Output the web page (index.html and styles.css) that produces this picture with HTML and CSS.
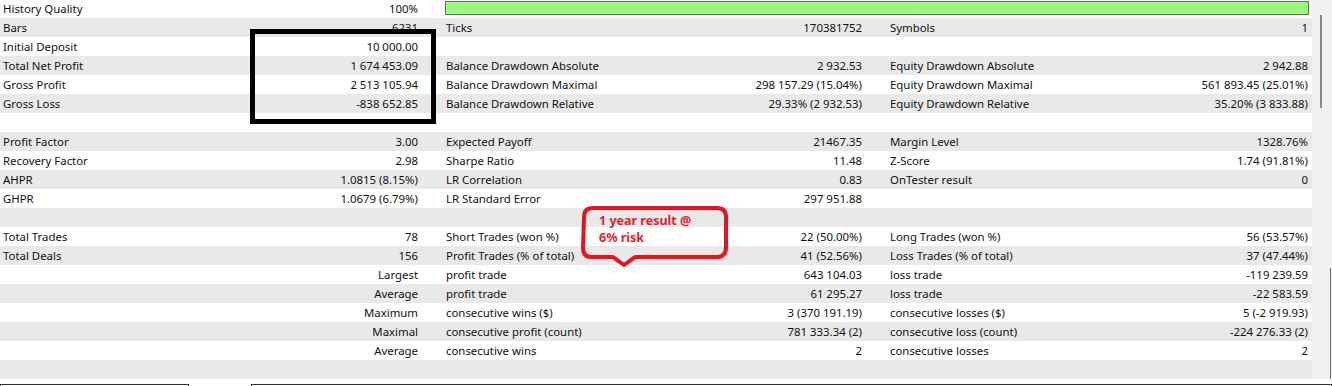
FILE: index.html
```html
<!DOCTYPE html>
<html>
<head>
<meta charset="utf-8">
<link rel="stylesheet" href="styles.css">
</head>
<body>
<div class="screen">
  <div class="main">
    <div class="report">
      <div class="row first">
        <div class="grp"><span>History Quality</span><span>100%</span></div>
        <div class="quality"><div class="qbar"></div></div>
      </div>
      <div class="row alt">
        <div class="grp"><span>Bars</span><span>6231</span></div>
        <div class="grp"><span>Ticks</span><span>170381752</span></div>
        <div class="grp"><span>Symbols</span><span>1</span></div>
      </div>
      <div class="row">
        <div class="grp"><span>Initial Deposit</span><span>10 000.00</span></div>
        <div class="grp"></div>
        <div class="grp"></div>
      </div>
      <div class="row alt">
        <div class="grp"><span>Total Net Profit</span><span>1 674 453.09</span></div>
        <div class="grp"><span>Balance Drawdown Absolute</span><span>2 932.53</span></div>
        <div class="grp"><span>Equity Drawdown Absolute</span><span>2 942.88</span></div>
      </div>
      <div class="row">
        <div class="grp"><span>Gross Profit</span><span>2 513 105.94</span></div>
        <div class="grp"><span>Balance Drawdown Maximal</span><span>298 157.29 (15.04%)</span></div>
        <div class="grp"><span>Equity Drawdown Maximal</span><span>561 893.45 (25.01%)</span></div>
      </div>
      <div class="row alt">
        <div class="grp"><span>Gross Loss</span><span>-838 652.85</span></div>
        <div class="grp"><span>Balance Drawdown Relative</span><span>29.33% (2 932.53)</span></div>
        <div class="grp"><span>Equity Drawdown Relative</span><span>35.20% (3 833.88)</span></div>
      </div>
      <div class="row"></div>
      <div class="row alt">
        <div class="grp"><span>Profit Factor</span><span>3.00</span></div>
        <div class="grp"><span>Expected Payoff</span><span>21467.35</span></div>
        <div class="grp"><span>Margin Level</span><span>1328.76%</span></div>
      </div>
      <div class="row">
        <div class="grp"><span>Recovery Factor</span><span>2.98</span></div>
        <div class="grp"><span>Sharpe Ratio</span><span>11.48</span></div>
        <div class="grp"><span>Z-Score</span><span>1.74 (91.81%)</span></div>
      </div>
      <div class="row alt">
        <div class="grp"><span>AHPR</span><span>1.0815 (8.15%)</span></div>
        <div class="grp"><span>LR Correlation</span><span>0.83</span></div>
        <div class="grp"><span>OnTester result</span><span>0</span></div>
      </div>
      <div class="row">
        <div class="grp"><span>GHPR</span><span>1.0679 (6.79%)</span></div>
        <div class="grp"><span>LR Standard Error</span><span>297 951.88</span></div>
        <div class="grp"></div>
      </div>
      <div class="row alt"></div>
      <div class="row">
        <div class="grp"><span>Total Trades</span><span>78</span></div>
        <div class="grp"><span>Short Trades (won %)</span><span>22 (50.00%)</span></div>
        <div class="grp"><span>Long Trades (won %)</span><span>56 (53.57%)</span></div>
      </div>
      <div class="row alt">
        <div class="grp"><span>Total Deals</span><span>156</span></div>
        <div class="grp"><span>Profit Trades (% of total)</span><span>41 (52.56%)</span></div>
        <div class="grp"><span>Loss Trades (% of total)</span><span>37 (47.44%)</span></div>
      </div>
      <div class="row">
        <div class="grp"><span></span><span>Largest</span></div>
        <div class="grp"><span>profit trade</span><span>643 104.03</span></div>
        <div class="grp"><span>loss trade</span><span>-119 239.59</span></div>
      </div>
      <div class="row alt">
        <div class="grp"><span></span><span>Average</span></div>
        <div class="grp"><span>profit trade</span><span>61 295.27</span></div>
        <div class="grp"><span>loss trade</span><span>-22 583.59</span></div>
      </div>
      <div class="row">
        <div class="grp"><span></span><span>Maximum</span></div>
        <div class="grp"><span>consecutive wins ($)</span><span>3 (370 191.19)</span></div>
        <div class="grp"><span>consecutive losses ($)</span><span>5 (-2 919.93)</span></div>
      </div>
      <div class="row alt">
        <div class="grp"><span></span><span>Maximal</span></div>
        <div class="grp"><span>consecutive profit (count)</span><span>781 333.34 (2)</span></div>
        <div class="grp"><span>consecutive loss (count)</span><span>-224 276.33 (2)</span></div>
      </div>
      <div class="row">
        <div class="grp"><span></span><span>Average</span></div>
        <div class="grp"><span>consecutive wins</span><span>2</span></div>
        <div class="grp"><span>consecutive losses</span><span>2</span></div>
      </div>
      <div class="row alt"></div>
    </div>
    <div class="scroll"><div class="thumb"></div><div class="edge"></div></div>
  </div>
  <div class="bottom">
    <div class="box box-left"></div>
    <div class="box box-right"></div>
  </div>

  <div class="highlight"></div>
  <svg class="callout" width="156" height="70" viewBox="0 0 156 70">
    <path d="M15 5 L139 5 Q148 5 148 14 L148 44 Q148 54 139 54 L57 54 L46 62 L35 54 L13 54 Q5 54 5 45 L6 14 Q6 5 15 5 Z" fill="none" stroke="#e8131c" stroke-width="4" stroke-linejoin="round"/>
  </svg>
  <div class="callout-text">1 year result @<br>6% risk</div>
</div>
</body>
</html>
```
FILE: styles.css
```css
* { box-sizing: border-box; }
html, body { margin: 0; padding: 0; background: #ffffff; }
body {
  font-family: "Segoe UI", "Noto Sans", "Open Sans", sans-serif;
  font-size: 11.4px;
  color: #111111;
  overflow: hidden;
}
.screen {
  position: relative;
  width: 1332px;
  height: 386px;
  overflow: hidden;
}
.main {
  display: flex;
  height: 379px;
  overflow: hidden;
}
.report {
  width: 1312px;
  margin-top: -1px;
}
.row {
  display: grid;
  grid-template-columns: 415px 416px 418px;
  column-gap: 28px;
  height: 19px;
  padding: 0 4px 0 3px;
  align-items: center;
  background: #ffffff;
}
.row.alt { background: #e9e9e9; }
.grp {
  display: flex;
  justify-content: space-between;
  white-space: nowrap;
  line-height: 19px;
}
.quality {
  grid-column: 2 / 4;
  height: 19px;
  display: flex;
  align-items: flex-start;
  padding-top: 2px;
  margin-left: -1px;
  margin-right: -1px;
}
.qbar {
  width: 100%;
  height: 14px;
  background: #98fb7f;
  border: 1px solid #6a6a6a;
}
.scroll {
  position: relative;
  width: 20px;
  background: #f0f0f0;
}
.thumb {
  margin: 15px 0 0 8px;
  width: 2px;
  height: 93px;
  background: #8a8a8a;
}
.edge {
  position: absolute;
  right: 1px;
  top: 268px;
  bottom: 0;
  width: 1px;
  background: #6e6e6e;
}
.bottom {
  display: flex;
  height: 7px;
  padding-top: 5px;
  background: #ffffff;
}
.box {
  height: 10px;
  border: 1px solid #333333;
  background: #ffffff;
}
.box-left { width: 189px; }
.box-right { margin-left: 62px; flex: 1; }
.highlight {
  position: absolute;
  left: 250px;
  top: 29px;
  width: 186px;
  height: 95px;
  border: 5px solid #000000;
}
.callout {
  position: absolute;
  left: 578px;
  top: 203px;
}
.callout-text {
  position: absolute;
  left: 599px;
  top: 212px;
  font-family: "Segoe UI", "Noto Sans", sans-serif;
  font-weight: bold;
  font-size: 12.5px;
  line-height: 17px;
  color: #e8202a;
  white-space: nowrap;
}
```
